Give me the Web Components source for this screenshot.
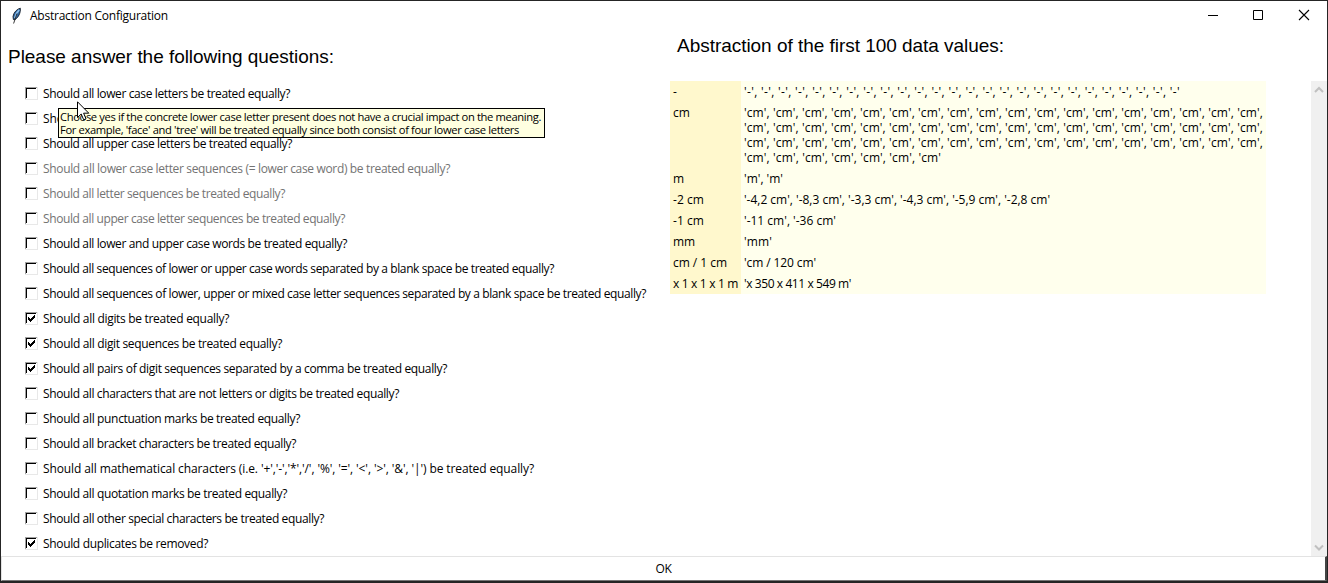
<!DOCTYPE html>
<html lang="en">
<head>
<meta charset="utf-8">
<title>Abstraction Configuration</title>
<style>
html, body { margin: 0; height: 100%; overflow: hidden; background: #fff; }
body { font: 12px/15px "Open Sans", "Noto Sans", sans-serif; color: #000; }
</style>
</head>
<body>
<config-window></config-window>
<script>
const define = (name, html, ready) => customElements.define(name, class extends HTMLElement {
  connectedCallback() {
    if (this.shadowRoot) return;
    const t = document.createElement('template');
    t.innerHTML = html;
    this.attachShadow({ mode: 'open' }).append(t.content.cloneNode(true));
    if (ready) ready(this, this.shadowRoot);
  }
});

// A single line of text whose tracking is adjusted to a given width.
define('fit-text', `<style>:host{display:block;white-space:pre}span{display:inline-block}</style><span><slot></slot></span>`, (el, root) => {
  const span = root.querySelector('span');
  const w = +el.getAttribute('w');
  if (w) span.style.letterSpacing = ((w - span.getBoundingClientRect().width) / el.textContent.length) + 'px';
});

define('title-bar', `<style>
:host{display:flex;align-items:center;height:29px;padding-left:9px}
.name{margin-left:8px;flex:1}
svg{display:block}
.buttons{display:flex}
.buttons svg{width:46px;height:29px}
.buttons svg:first-child{margin-right:-1px;padding-left:1px}
</style>
<svg width="12" height="18" viewBox="0 0 12 18"><path d="M10.3 1.2C7 2 3.6 5.4 3 9.5L3.4 12.6L5 12.6C8.3 10.5 10.8 6 10.3 1.2Z" fill="#2c66a4" stroke="#141c26" stroke-width=".9"/><path d="M9.2 2.8C6.8 5 5.6 8 4.8 11" stroke="#8fc0ea" stroke-width="1.7" fill="none"/><path d="M7 6.5L3.6 16.5" stroke="#222" stroke-width=".9" fill="none"/></svg>
<fit-text class="name" w="138">Abstraction Configuration</fit-text>
<div class="buttons">
<svg viewBox="0 0 46 29" shape-rendering="crispEdges"><path d="M18 14h10v1H18z"/></svg>
<svg viewBox="0 0 46 29"><path d="M18.5 9.5h9v9h-9z" fill="none" stroke="#000"/></svg>
<svg viewBox="0 0 46 29"><path d="M18 9l10 10M28 9L18 19" fill="none" stroke="#000" stroke-width="1.1"/></svg>
</div>`);

define('check-row', `<style>
:host{display:flex;align-items:center;height:25px;padding-left:24px}
:host([disabled]) fit-text{color:#737373}
svg{display:block;width:13px;height:13px;margin-right:5px}
.tick{display:none}
:host([checked]) .tick{display:block}
</style>
<svg viewBox="0 0 13 13" shape-rendering="crispEdges"><path d="M0 0h12v1H1v11H0z" fill="#a0a0a0"/><path d="M1 1h10v1H2v9H1z" fill="#000"/><path d="M12 0h1v13H0v-1h12z" fill="#e8e8e8"/><path class="tick" d="M3 5h1v1h1v1h1V6h1V5h1V4h1V3h1v3H9v1H8v1H7v1H6v1H5V9H4V8H3z"/></svg>
<fit-text></fit-text>`, (el, root) => {
  const old = root.querySelector('fit-text');
  const t = document.createElement('fit-text');
  t.setAttribute('w', el.getAttribute('w'));
  t.textContent = el.getAttribute('label');
  old.replaceWith(t);
});

define('section-heading', `<style>:host{display:block;font:19px/24px "Liberation Sans",Arial,sans-serif}</style><slot></slot>`);

define('value-row', `<style>
:host{display:grid;grid-template-columns:71px 1fr;background:#ffffed}
.key{background:#fff8cd;padding:3px 0 3px 3px}
.val{padding:3px 0 3px 3px}
</style><div class="key"><slot name="key"></slot></div><div class="val"><slot></slot></div>`);

define('scroll-track', `<style>
:host{display:flex;flex-direction:column;justify-content:space-between;width:16px;background:#f0f0f0}
svg{display:block}
</style>
<svg width="16" height="17"><path d="M4 11L8 7L12 11" fill="none" stroke="#c0c0c0" stroke-width="2"/></svg>
<svg width="16" height="17"><path d="M4 6.5L8 10.5L12 6.5" fill="none" stroke="#c0c0c0" stroke-width="2"/></svg>`);

define('ok-button', `<style>
:host{display:flex;align-items:center;justify-content:center;height:25px;box-sizing:border-box;border:1px solid #e3e3e3;border-right:2px solid #444;border-bottom:1px solid #777}
</style><slot></slot>`);

define('tool-tip', `<style>
:host{display:block;box-sizing:border-box;width:487px;height:30px;border:1px solid #000;background:#ffffe0;padding:1px 0 0 1px;font-size:11.2px;line-height:13px}
</style><slot></slot>`);

define('mouse-pointer', `<style>:host{display:block}svg{display:block}</style>
<svg width="13" height="20" viewBox="0 0 13 20"><path d="M.5 .8V16.5L4.2 13L6.7 18.8L9 17.8L6.6 12.2H11.8Z" fill="#fff" stroke="#000"/></svg>`);

const questions = [
  ['Should all lower case letters be treated equally?', 247],
  ['Sho', 21],
  ['Should all upper case letters be treated equally?', 249],
  ['Should all lower case letter sequences (= lower case word) be treated equally?', 407, 'disabled'],
  ['Should all letter sequences be treated equally?', 242, 'disabled'],
  ['Should all upper case letter sequences be treated equally?', 302, 'disabled'],
  ['Should all lower and upper case words be treated equally?', 304],
  ['Should all sequences of lower or upper case words separated by a blank space be treated equally?', 511],
  ['Should all sequences of lower, upper or mixed case letter sequences separated by a blank space be treated equally?', 603],
  ['Should all digits be treated equally?', 186, 'checked'],
  ['Should all digit sequences be treated equally?', 239, 'checked'],
  ['Should all pairs of digit sequences separated by a comma be treated equally?', 404, 'checked'],
  ['Should all characters that are not letters or digits be treated equally?', 356],
  ['Should all punctuation marks be treated equally?', 257],
  ['Should all bracket characters be treated equally?', 253],
  ["Should all mathematical characters (i.e. '+','-','*','/', '%', '=', '<', '>', '&', '|') be treated equally?", 491],
  ['Should all quotation marks be treated equally?', 244],
  ['Should all other special characters be treated equally?', 281],
  ['Should duplicates be removed?', 165, 'checked']
];
const repeat = (s, n) => Array(n).fill(s).join(', ');
const cmLine = [repeat("'cm'", 18) + ',', 519];
const values = [
  ['-', 5, [[repeat("'-'", 26), 436]]],
  ['cm', 17, [cmLine, cmLine, cmLine, [repeat("'cm'", 7), 197]]],
  ['m', 11, [["'m', 'm'", 39]]],
  ['-2 cm', 31, [["'-4,2 cm', '-8,3 cm', '-3,3 cm', '-4,3 cm', '-5,9 cm', '-2,8 cm'", 306]]],
  ['-1 cm', 31, [["'-11 cm', '-36 cm'", 92]]],
  ['mm', 22, [["'mm'", 28]]],
  ['cm / 1 cm', 54, [["'cm / 120 cm'", 72]]],
  ['x 1 x 1 x 1 m', 65, [["'x 350 x 411 x 549 m'", 107]]]
];

define('config-window', `<style>
:host{position:relative;display:flex;flex-direction:column;box-sizing:border-box;width:1328px;height:583px;border:1px solid #252525;border-bottom-width:2px;background:#fff}
main{display:flex;flex:1;min-height:0}
.left{width:669px}
.left section-heading{padding:15px 0 12px 7px}
.right{flex:1;display:flex;flex-direction:column}
.right section-heading{padding:4px 0 23px 7px}
.body{display:flex;flex:1;justify-content:space-between}
.table{width:596px}
tool-tip{position:absolute;left:57px;top:107px}
mouse-pointer{position:absolute;left:76px;top:100px}
</style>
<title-bar></title-bar>
<main>
<div class="left"><section-heading><fit-text w="326">Please answer the following questions:</fit-text></section-heading><div class="list"></div></div>
<div class="right"><section-heading><fit-text w="327">Abstraction of the first 100 data values:</fit-text></section-heading><div class="body"><div class="table"></div><scroll-track></scroll-track></div></div>
</main>
<ok-button><fit-text w="16">OK</fit-text></ok-button>
<tool-tip><fit-text w="481">Choose yes if the concrete lower case letter present does not have a crucial impact on the meaning.</fit-text><fit-text w="459">For example, 'face' and 'tree' will be treated equally since both consist of four lower case letters</fit-text></tool-tip>
<mouse-pointer></mouse-pointer>`, (el, root) => {
  const fit = (text, w) => {
    const f = document.createElement('fit-text');
    f.setAttribute('w', w);
    f.textContent = text;
    return f;
  };
  for (const [label, w, state] of questions) {
    const q = document.createElement('check-row');
    q.setAttribute('label', label);
    q.setAttribute('w', w);
    if (state) q.setAttribute(state, '');
    root.querySelector('.list').append(q);
  }
  for (const [key, kw, lines] of values) {
    const row = document.createElement('value-row');
    const k = fit(key, kw);
    k.slot = 'key';
    row.append(k, ...lines.map(l => fit(...l)));
    root.querySelector('.table').append(row);
  }
});
</script>
</body>
</html>
